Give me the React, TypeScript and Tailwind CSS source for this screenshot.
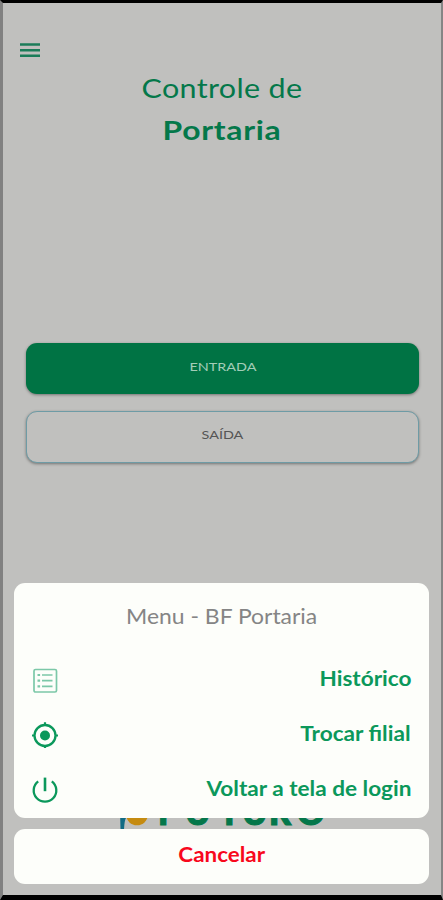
import type { ReactNode } from 'react';

type MenuItem = {
  label: string;
  icon: ReactNode;
};

function ListIcon() {
  return (
    <svg width="26" height="26" viewBox="0 0 26 26" fill="none" stroke="#7cc8a8">
      <rect x="2" y="2.5" width="22.5" height="22.5" rx="1.5" strokeWidth="1.7" />
      <path d="M10 8h10.5M10 13.6h10.5M10 19.4h10.5" strokeWidth="1.7" />
      <path d="M5.5 8h2.6M5.5 13.6h2.6M5.5 19.4h2.6" strokeWidth="2.2" />
    </svg>
  );
}

function LocateIcon() {
  return (
    <svg width="26" height="26" viewBox="0 0 26 26" fill="none" stroke="#0b985b">
      <circle cx="13" cy="13.5" r="10.5" strokeWidth="2.3" />
      <circle cx="13" cy="13.5" r="5" fill="#0b985b" stroke="none" />
      <path d="M13 .3v3M13 23v3M0 13.5h3M23 13.5h3" strokeWidth="2.2" />
    </svg>
  );
}

function PowerIcon() {
  return (
    <svg width="26" height="26" viewBox="0 0 26 26" fill="none" stroke="#0b985b" strokeWidth="2.3">
      <path d="M13 .6v13.6" strokeWidth="2.6" />
      <path d="M6.2 4.300a11.300 11.300 0 1 0 13.600 0" />
    </svg>
  );
}

const menuItems: MenuItem[] = [
  { label: 'Histórico', icon: <ListIcon /> },
  { label: 'Trocar filial', icon: <LocateIcon /> },
  { label: 'Voltar a tela de login', icon: <PowerIcon /> },
];

function Logo() {
  return (
    <svg width="220" height="50" viewBox="0 0 220 50" className="block">
      <path d="M8 20h6v8q-1.500 2-2 11.500h-3.500z" fill="#116b84" />
      <circle cx="25" cy="24.500" r="10.800" fill="#c58b10" />
      <text
        x="46 73 107 130 157 185"
        y="34.5"
        fill="#04774a"
        stroke="#04774a"
        strokeWidth="1.2"
        fontFamily="Lato, sans-serif"
        fontSize="34"
        fontWeight="900"
      >
        FUTURO
      </text>
    </svg>
  );
}

export default function App() {
  return (
    <div className="relative flex h-[900px] w-[443px] flex-col overflow-hidden border-t-[3px] border-r-2 border-b-[5px] border-l-[3px] border-t-black border-r-[#858585] border-b-black border-l-[#818181] bg-[#c0c0be] font-['Lato',sans-serif]">
      {/* Page */}
      <header className="px-[17px] pt-10">
        <button type="button" aria-label="Menu" className="block">
          <svg width="20" height="15" viewBox="0 0 20 15" className="block">
            <path d="M0 1.5h20M0 7.3h20M0 12.8h20" stroke="#1b7c59" strokeWidth="2.5" />
          </svg>
        </button>
      </header>

      <h1 className="mt-[9px] text-center text-[#04784a]">
        <span className="block origin-center scale-x-[1.15] text-[26.5px] leading-[42px] font-normal tracking-[0.3px]">
          Controle de
        </span>
        <span className="block origin-center scale-x-[1.18] text-[27px] leading-[42px] font-bold tracking-[0.6px]">
          Portaria
        </span>
      </h1>

      <main className="mt-[192px] flex flex-col gap-[17px] pr-[22px] pl-[23px]">
        <button
          type="button"
          className="h-[51px] rounded-[11px] bg-[#007344] pb-1 text-[12px] text-[#a3cdb8] shadow-[0_1px_3px_rgba(0,0,0,0.4)]"
        >
          <span className="inline-block scale-x-[1.2]">ENTRADA</span>
        </button>
        <button
          type="button"
          className="h-[52px] rounded-[11px] border border-[#6e9ba5] bg-[#c0c0be] pb-1 text-[12px] text-[#555555] shadow-[0_1px_3px_rgba(0,0,0,0.4)]"
        >
          <span className="inline-block scale-x-[1.2]">SAÍDA</span>
        </button>
      </main>

      <footer className="mt-auto flex justify-center pb-[55px]">
        <Logo />
      </footer>

      {/* Action sheet */}
      <div className="absolute inset-x-0 bottom-0 flex flex-col gap-[11px] pr-3 pb-[11px] pl-[11px]">
        <section className="h-[235px] rounded-[11px] bg-[#fdfefa] px-[18px]">
          <h2 className="flex h-[69px] items-center justify-center pb-[3px] text-[21px] font-normal text-[#858585]">
            <span className="inline-block scale-x-[1.09]">Menu - BF Portaria</span>
          </h2>
          <ul>
            {menuItems.map((item) => (
              <li key={item.label} className="flex h-[55px] items-center justify-between">
                {item.icon}
                <span className="inline-block origin-right scale-x-[1.13] pb-[3px] text-[20px] leading-6 font-bold text-[#0b985b]">
                  {item.label}
                </span>
              </li>
            ))}
          </ul>
        </section>
        <button
          type="button"
          className="h-[55px] rounded-[11px] bg-[#fdfefa] pb-[5px] text-[20px] font-bold text-[#f8081c]"
        >
          <span className="inline-block scale-x-[1.12]">Cancelar</span>
        </button>
      </div>
    </div>
  );
}
